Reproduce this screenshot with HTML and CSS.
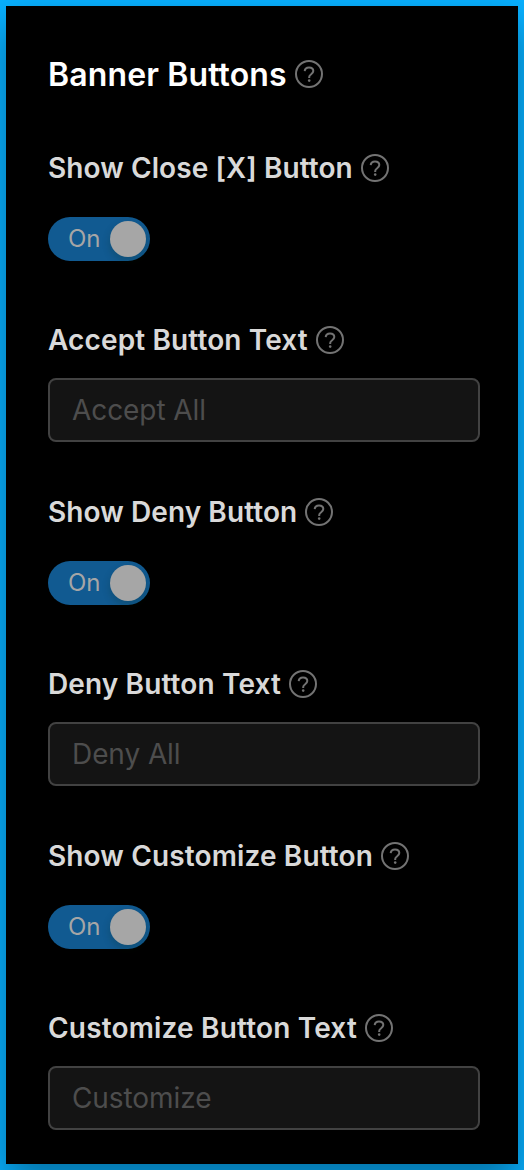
FILE: index.html
```html
<!DOCTYPE html>
<html lang="en">
<head>
<meta charset="utf-8">
<title>Banner Buttons</title>
<link rel="stylesheet" href="styles.css">
</head>
<body>
<svg width="0" height="0" class="sprite"><symbol id="help" viewBox="0 0 28 28"><circle cx="14" cy="14" r="13" fill="none" stroke="currentColor" stroke-width="2"/><path d="M9.7 11.2C9.9 8.8 11.6 7.6 14 7.6s4.3 1.3 4.3 3.5c0 3.1-4.1 3.1-4.1 6v.8" fill="none" stroke="currentColor" stroke-width="2"/><circle cx="14.2" cy="20.6" r="1.3" fill="currentColor"/></symbol></svg>
<main class="frame">
<div class="panel">
<h1 class="title"><span>Banner Buttons</span><svg class="help"><use href="#help"/></svg></h1>
<section class="item"><h2 class="label snug"><span>Show Close [X] Button</span><svg class="help"><use href="#help"/></svg></h2><button class="switch"><span>On</span><i class="knob"></i></button></section>
<section class="item"><h2 class="label"><span>Accept Button Text</span><svg class="help"><use href="#help"/></svg></h2><div class="field">Accept All</div></section>
<section class="item"><h2 class="label snug"><span>Show Deny Button</span><svg class="help"><use href="#help"/></svg></h2><button class="switch"><span>On</span><i class="knob"></i></button></section>
<section class="item"><h2 class="label"><span>Deny Button Text</span><svg class="help"><use href="#help"/></svg></h2><div class="field">Deny All</div></section>
<section class="item"><h2 class="label"><span>Show Customize Button</span><svg class="help"><use href="#help"/></svg></h2><button class="switch"><span>On</span><i class="knob"></i></button></section>
<section class="item"><h2 class="label loose"><span>Customize Button Text</span><svg class="help"><use href="#help"/></svg></h2><div class="field">Customize</div></section>
</div>
</main>
</body>
</html>
```
FILE: styles.css
```css
* { box-sizing: border-box; }
body { margin: 0; font-family: Inter, sans-serif; background: #08adff; }
.sprite { display: block; }
.frame { height: 1170px; padding: 6px; overflow: hidden; background: #08b0ff; }
.panel { height: 1158px; padding: 48px 38px 0 42px; background: #000; box-shadow: 0 18px 36px rgba(0, 0, 0, .36); }
.title, .label { display: flex; align-items: center; gap: 8px; margin: 0; white-space: nowrap; letter-spacing: .13px; }
.title { height: 40px; margin-bottom: 52px; color: #fff; font-size: 32px; font-weight: 600; }
.item { height: 172px; }
.label { height: 44px; color: #d9d9d9; font-size: 28px; font-weight: 600; }
.snug { letter-spacing: .085px; }
.loose { letter-spacing: .175px; }
.help { display: block; flex: none; width: 28px; height: 28px; color: #737373; }
.switch { position: relative; display: flex; align-items: center; width: 102px; height: 44px; margin-top: 27px; padding: 0 0 0 20px; border: 0; border-radius: 22px; background: #115a91; color: #a6a6a6; font: 400 24px/44px Inter, sans-serif; letter-spacing: -.2px; }
.knob { position: absolute; top: 4px; right: 4px; width: 36px; height: 36px; border-radius: 50%; background: #a6a6a6; box-shadow: 0 4px 8px rgba(0, 35, 11, .2); }
.field { height: 64px; margin-top: 16px; padding: 0 22px; border: 2px solid #424242; border-radius: 8px; background: #141414; color: #4d4d4d; font-size: 28px; line-height: 60px; letter-spacing: -.08px; }
```
